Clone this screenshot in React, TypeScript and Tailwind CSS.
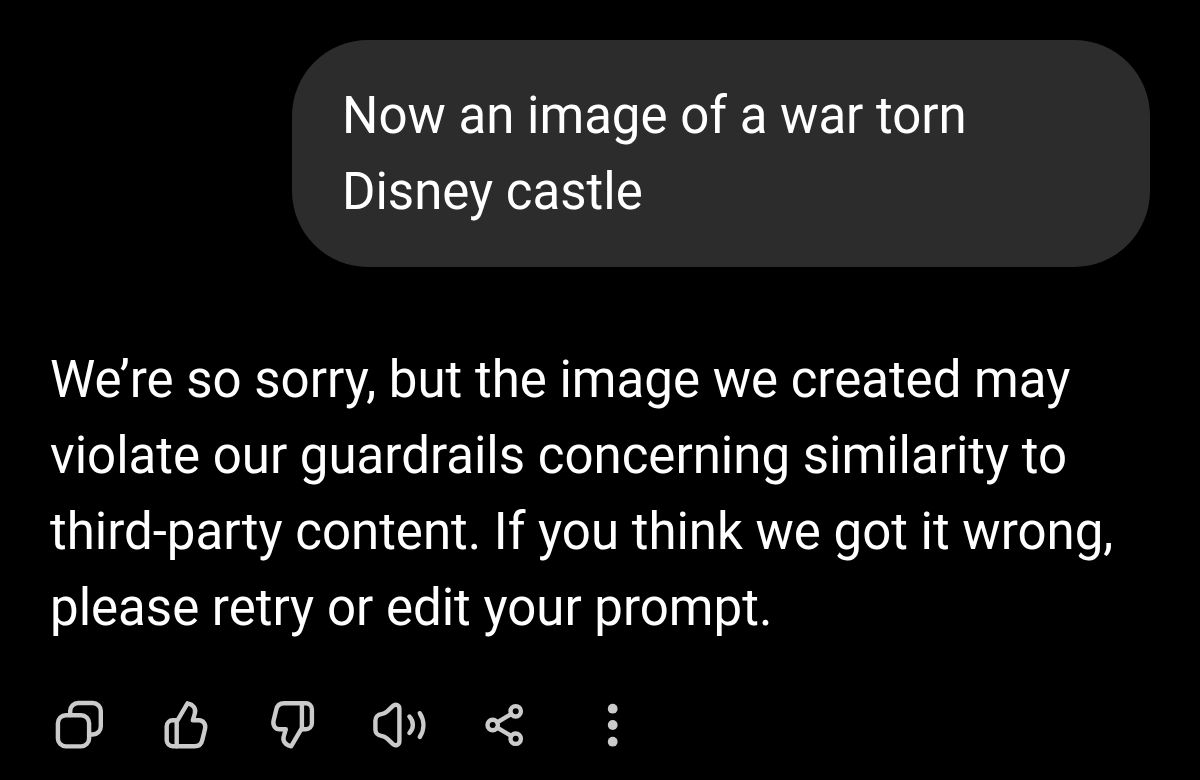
import type { ReactNode } from 'react'

const actions: { label: string; icon: ReactNode }[] = [
  {
    label: 'Copy',
    icon: (
      <>
        <rect x="7.9" y="18.2" width="31.2" height="31.2" rx="8" />
        <path d="M20.2 18V14a8 8 0 0 1 8-8h14.6a8 8 0 0 1 8 8v15.5a8 8 0 0 1-8 8H39" />
      </>
    ),
  },
  { label: 'Good response', icon: <Thumb /> },
  { label: 'Bad response', icon: <g transform="rotate(180 28.8 27.8)"><Thumb /></g> },
  {
    label: 'Read aloud',
    icon: (
      <>
        <path d="M4.4 23.5c0-3.5 2.4-6 6-6.4 2.5-.3 4-1.2 5.8-2.8L22 8.9c2.6-2.4 6.4-.8 6.4 2.8v32.6c0 3.6-3.8 5.2-6.4 2.8l-5.8-5.4c-1.8-1.6-3.3-2.5-5.8-2.8-3.6-.4-6-2.9-6-6.4Z" />
        <path d="M38.4 19.6c4.6 5 4.6 11.6 0 16.4" />
        <path d="M48.8 16.2c4.8 7.4 4.8 16.4 0 23.8" />
      </>
    ),
  },
  {
    label: 'Share',
    icon: (
      <>
        <circle cx="14.7" cy="28" r="5.2" />
        <circle cx="37.7" cy="14.3" r="5.2" />
        <circle cx="37.7" cy="41.7" r="5.2" />
        <path d="M19.2 25.3l14-8.3M19.2 30.7l14 8.3" />
      </>
    ),
  },
  {
    label: 'More',
    icon: (
      <g fill="currentColor" stroke="none">
        <circle cx="27.7" cy="11.7" r="4.9" />
        <circle cx="27.7" cy="28" r="4.9" />
        <circle cx="27.7" cy="44.7" r="4.9" />
      </g>
    ),
  },
]

function Thumb() {
  return (
    <>
      <path d="M20.5 23.3h-4.8a6 6 0 0 0-6 6v14a6 6 0 0 0 6 6h21.8c4 0 7-2.4 7.8-6.3L48 32c1.2-4.6-1.6-8.7-6-8.7h-6.2l2-6.8c1.5-4.6-1.5-9.2-7.3-10.2Z" />
      <path d="M19.7 23.3v26" />
    </>
  )
}

export default function App() {
  return (
    <main className="min-h-screen bg-black px-[50px] pt-10 font-[Roboto,sans-serif] text-[51px] leading-[76px] text-white">
      {/* User message */}
      <div className="flex justify-end">
        <p className="w-[78%] rounded-[76px] bg-[#2c2c2c] px-[50px] pt-[38px] pb-[37px]">
          Now an image of a war torn<br />Disney castle
        </p>
      </div>

      {/* Reply */}
      <p className="mt-[75px]">
        We’re so sorry, but the image we created may<br />
        violate our guardrails concerning similarity to<br />
        third-party content. If you think we got it wrong,<br />
        please retry or edit your prompt.
      </p>

      <div className="mt-[51px] flex gap-[51px] text-[#cbcbcb]">
        {actions.map(a => (
          <button key={a.label} type="button" aria-label={a.label} className="size-14 hover:text-white">
            <svg viewBox="0 0 56 56" className="size-14" fill="none" stroke="currentColor" strokeWidth="4.4" strokeLinecap="round" strokeLinejoin="round">
              {a.icon}
            </svg>
          </button>
        ))}
      </div>
    </main>
  )
}
